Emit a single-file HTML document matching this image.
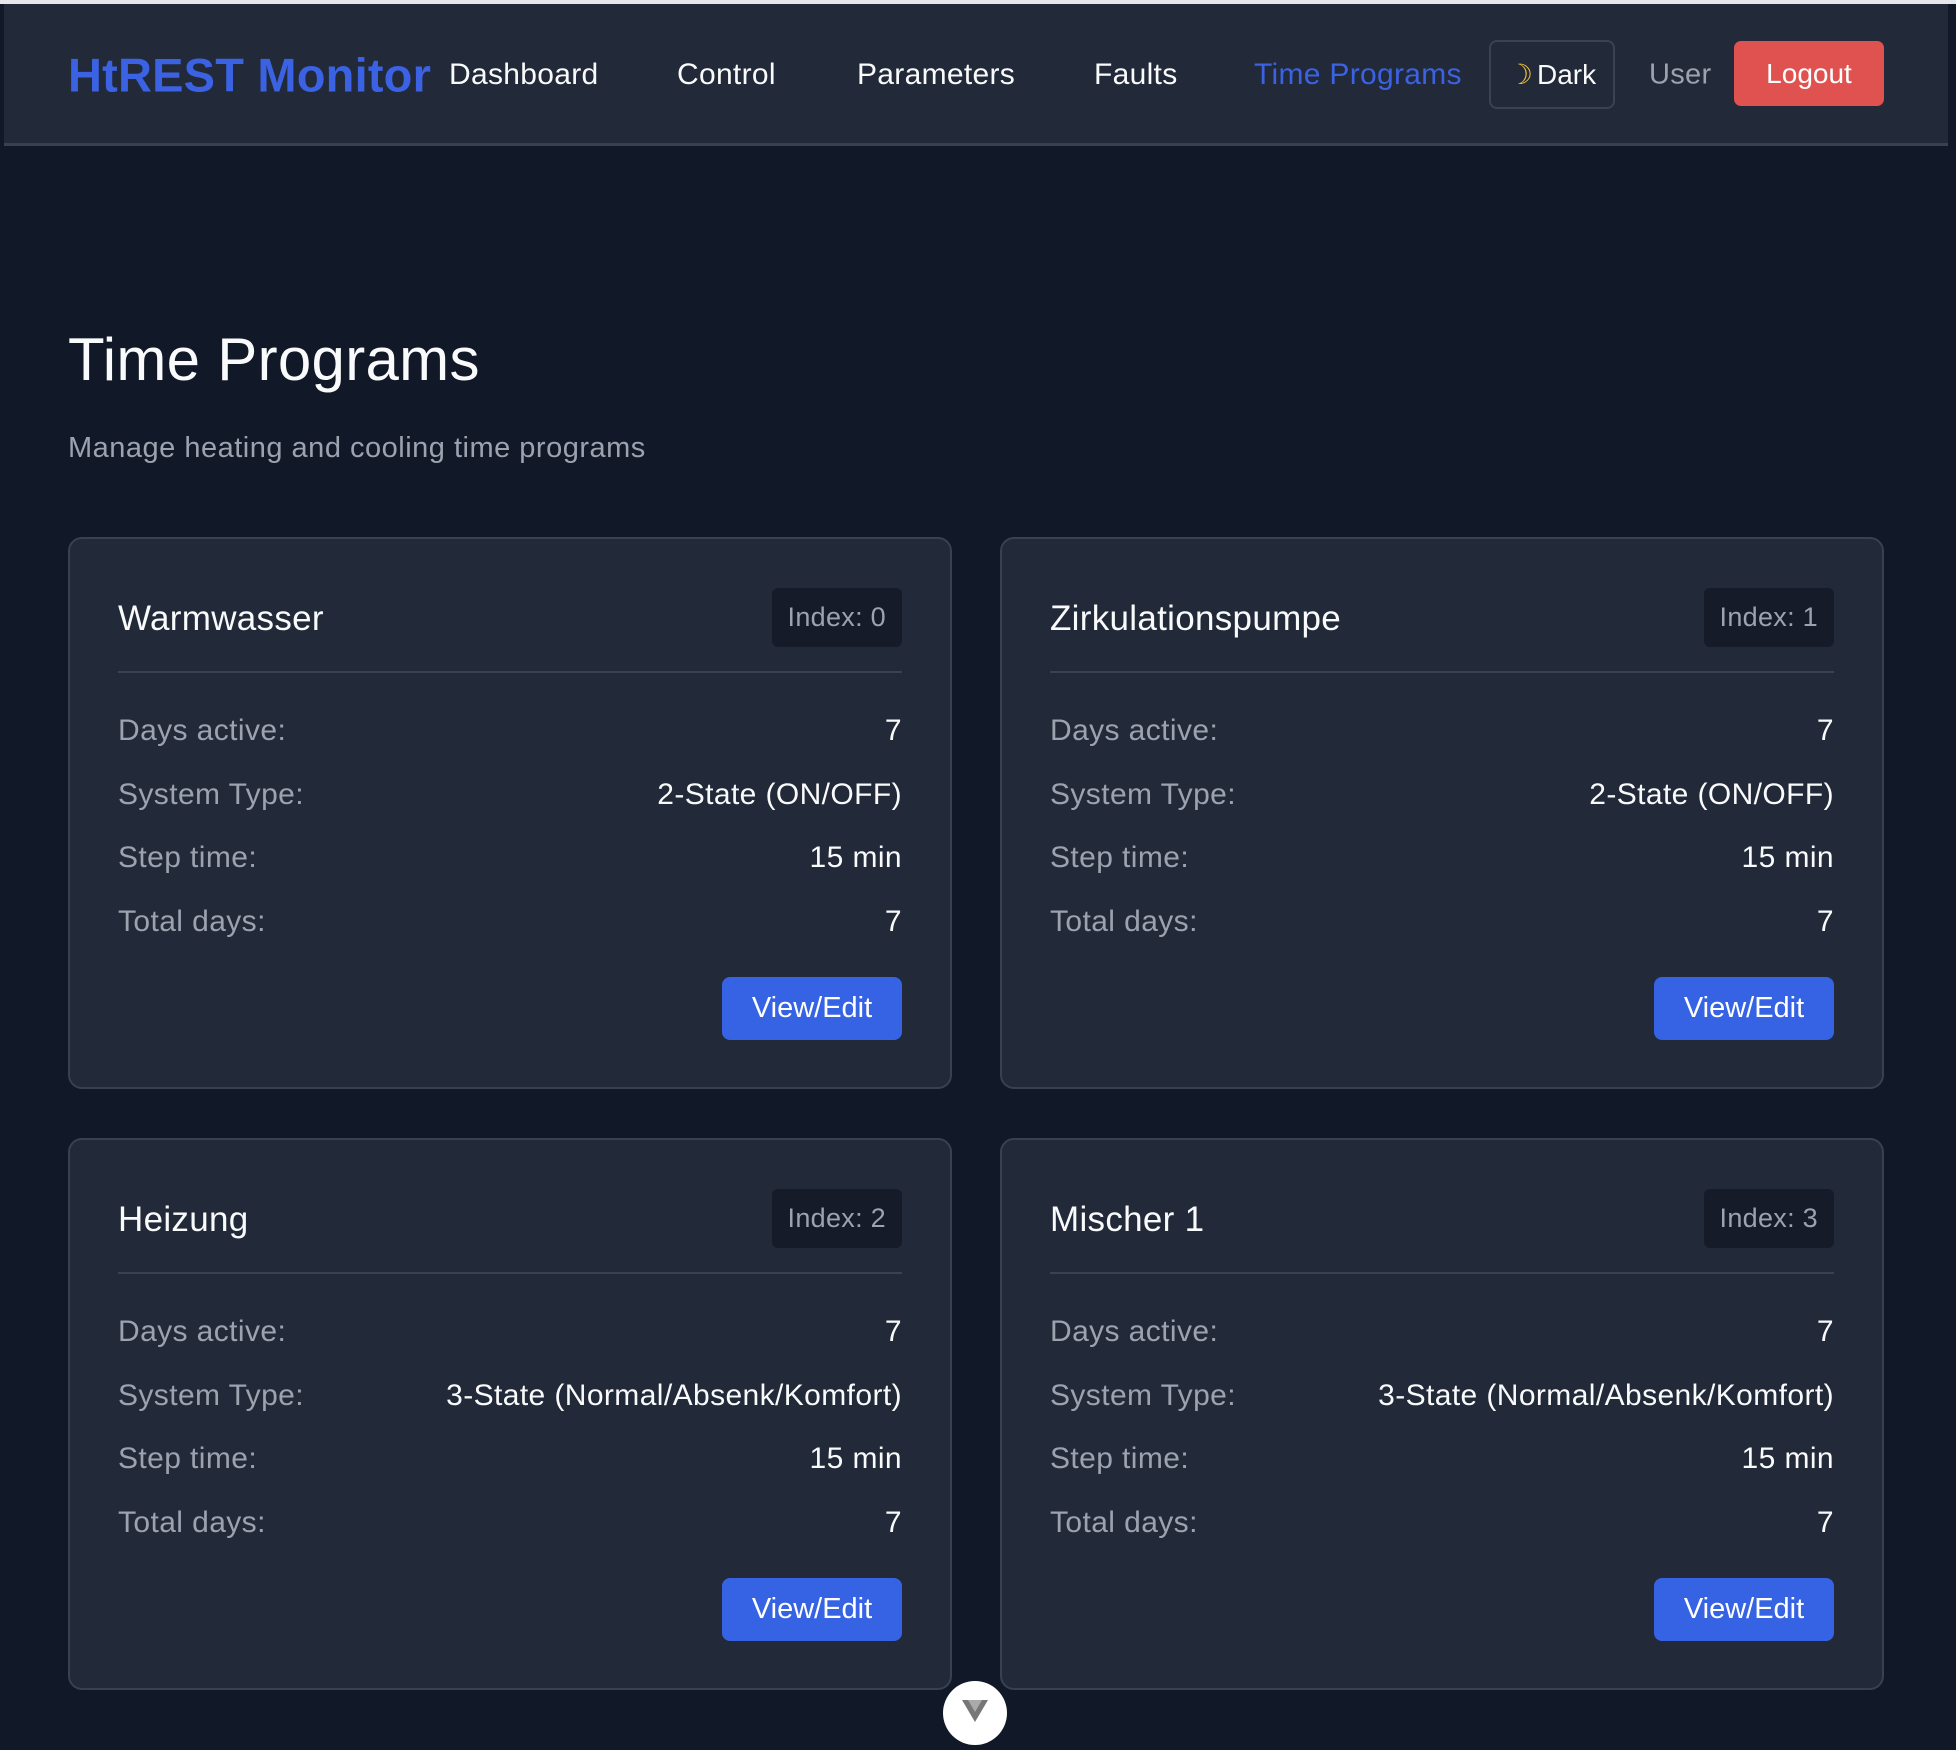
<!DOCTYPE html>
<html><head><meta charset="utf-8"><style>
*{margin:0;padding:0;box-sizing:border-box}
body{width:1956px;height:1722px;background:#111827;font-family:"Liberation Sans",sans-serif;position:relative;overflow:hidden;color:#f3f4f6}
.top{position:absolute;left:0;top:0;width:1956px;height:4px;background:#e5e7eb}
.nav{position:absolute;left:4px;top:4px;width:1944px;height:142px;background:#222938;border-bottom:3px solid #374151}
.a{position:absolute;top:75px;transform:translateY(-50%);font-size:30px;color:#f9fafb;white-space:nowrap;letter-spacing:0.3px}
.logo{left:68px;font-size:47px;font-weight:bold;color:#3a62e2;letter-spacing:0.2px}
.dark{position:absolute;left:1489px;top:40px;width:126px;height:69px;border:2px solid #3b4252;border-radius:8px;font-size:28px;color:#f9fafb;display:flex;align-items:center;justify-content:center;gap:4px}
.logout{position:absolute;left:1734px;top:41px;width:150px;height:65px;background:#e0524f;border-radius:7px;font-size:28px;color:#fff;display:flex;align-items:center;justify-content:center}
h1{position:absolute;left:68px;top:325px;font-size:60px;font-weight:normal;color:#f9fafb;letter-spacing:0.3px}
.sub{position:absolute;left:68px;top:432px;font-size:29px;color:#9ca3af;letter-spacing:0.5px}
.card{position:absolute;width:884px;height:552px;background:#222938;border:2px solid #374151;border-radius:14px}
.ct{position:absolute;left:48px;top:80px;transform:translateY(-50%);font-size:35px;color:#f9fafb;letter-spacing:0.3px}
.badge{position:absolute;right:48px;top:49px;height:59px;padding:0 16px;background:#151b28;border-radius:6px;font-size:27px;color:#9ca3af;display:flex;align-items:center;letter-spacing:0.3px}
.hr{position:absolute;left:48px;right:48px;top:132px;height:2px;background:#3a4252}
.row{position:absolute;left:48px;right:48px;transform:translateY(-50%);font-size:30px;display:flex;justify-content:space-between;letter-spacing:0.4px}
.row span:first-child{color:#9ca3af}
.row span:last-child{color:#f9fafb}
.btn{position:absolute;right:48px;top:438px;width:180px;height:63px;background:#3563e4;border-radius:8px;color:#fff;font-size:29px;display:flex;align-items:center;justify-content:center}
.circ{position:absolute;left:943px;top:1681px;width:64px;height:64px;border-radius:50%;background:#fff}
</style></head><body>
<div class="top"></div>
<div class="nav"></div>
<div class="a logo">HtREST Monitor</div>
<div class="a" style="left:449px">Dashboard</div>
<div class="a" style="left:677px">Control</div>
<div class="a" style="left:857px">Parameters</div>
<div class="a" style="left:1094px">Faults</div>
<div class="a" style="left:1254px;color:#3a62e2">Time Programs</div>
<div class="dark"><span style="color:#f5c542">☽</span>Dark</div>
<div class="a" style="left:1649px;color:#9ca3af;font-size:29px">User</div>
<div class="logout">Logout</div>
<h1>Time Programs</h1>
<div class="sub">Manage heating and cooling time programs</div>

<div class="card" style="left:68px;top:537px">
<div class="ct">Warmwasser</div><div class="badge">Index: 0</div><div class="hr"></div>
<div class="row" style="top:192px"><span>Days active:</span><span>7</span></div>
<div class="row" style="top:256px"><span>System Type:</span><span>2-State (ON/OFF)</span></div>
<div class="row" style="top:319px"><span>Step time:</span><span>15 min</span></div>
<div class="row" style="top:383px"><span>Total days:</span><span>7</span></div>
<div class="btn">View/Edit</div></div>

<div class="card" style="left:1000px;top:537px">
<div class="ct">Zirkulationspumpe</div><div class="badge">Index: 1</div><div class="hr"></div>
<div class="row" style="top:192px"><span>Days active:</span><span>7</span></div>
<div class="row" style="top:256px"><span>System Type:</span><span>2-State (ON/OFF)</span></div>
<div class="row" style="top:319px"><span>Step time:</span><span>15 min</span></div>
<div class="row" style="top:383px"><span>Total days:</span><span>7</span></div>
<div class="btn">View/Edit</div></div>

<div class="card" style="left:68px;top:1138px">
<div class="ct">Heizung</div><div class="badge">Index: 2</div><div class="hr"></div>
<div class="row" style="top:192px"><span>Days active:</span><span>7</span></div>
<div class="row" style="top:256px"><span>System Type:</span><span>3-State (Normal/Absenk/Komfort)</span></div>
<div class="row" style="top:319px"><span>Step time:</span><span>15 min</span></div>
<div class="row" style="top:383px"><span>Total days:</span><span>7</span></div>
<div class="btn">View/Edit</div></div>

<div class="card" style="left:1000px;top:1138px">
<div class="ct">Mischer 1</div><div class="badge">Index: 3</div><div class="hr"></div>
<div class="row" style="top:192px"><span>Days active:</span><span>7</span></div>
<div class="row" style="top:256px"><span>System Type:</span><span>3-State (Normal/Absenk/Komfort)</span></div>
<div class="row" style="top:319px"><span>Step time:</span><span>15 min</span></div>
<div class="row" style="top:383px"><span>Total days:</span><span>7</span></div>
<div class="btn">View/Edit</div></div>

<div class="circ"><svg width="64" height="64" viewBox="0 0 64 64"><path d="M19 19 L32 41 L45 19 L38 19 L32 30 L26 19Z" fill="#777"/><path d="M25 19 L32 31 L39 19" fill="#aaa"/></svg></div>
</body></html>
